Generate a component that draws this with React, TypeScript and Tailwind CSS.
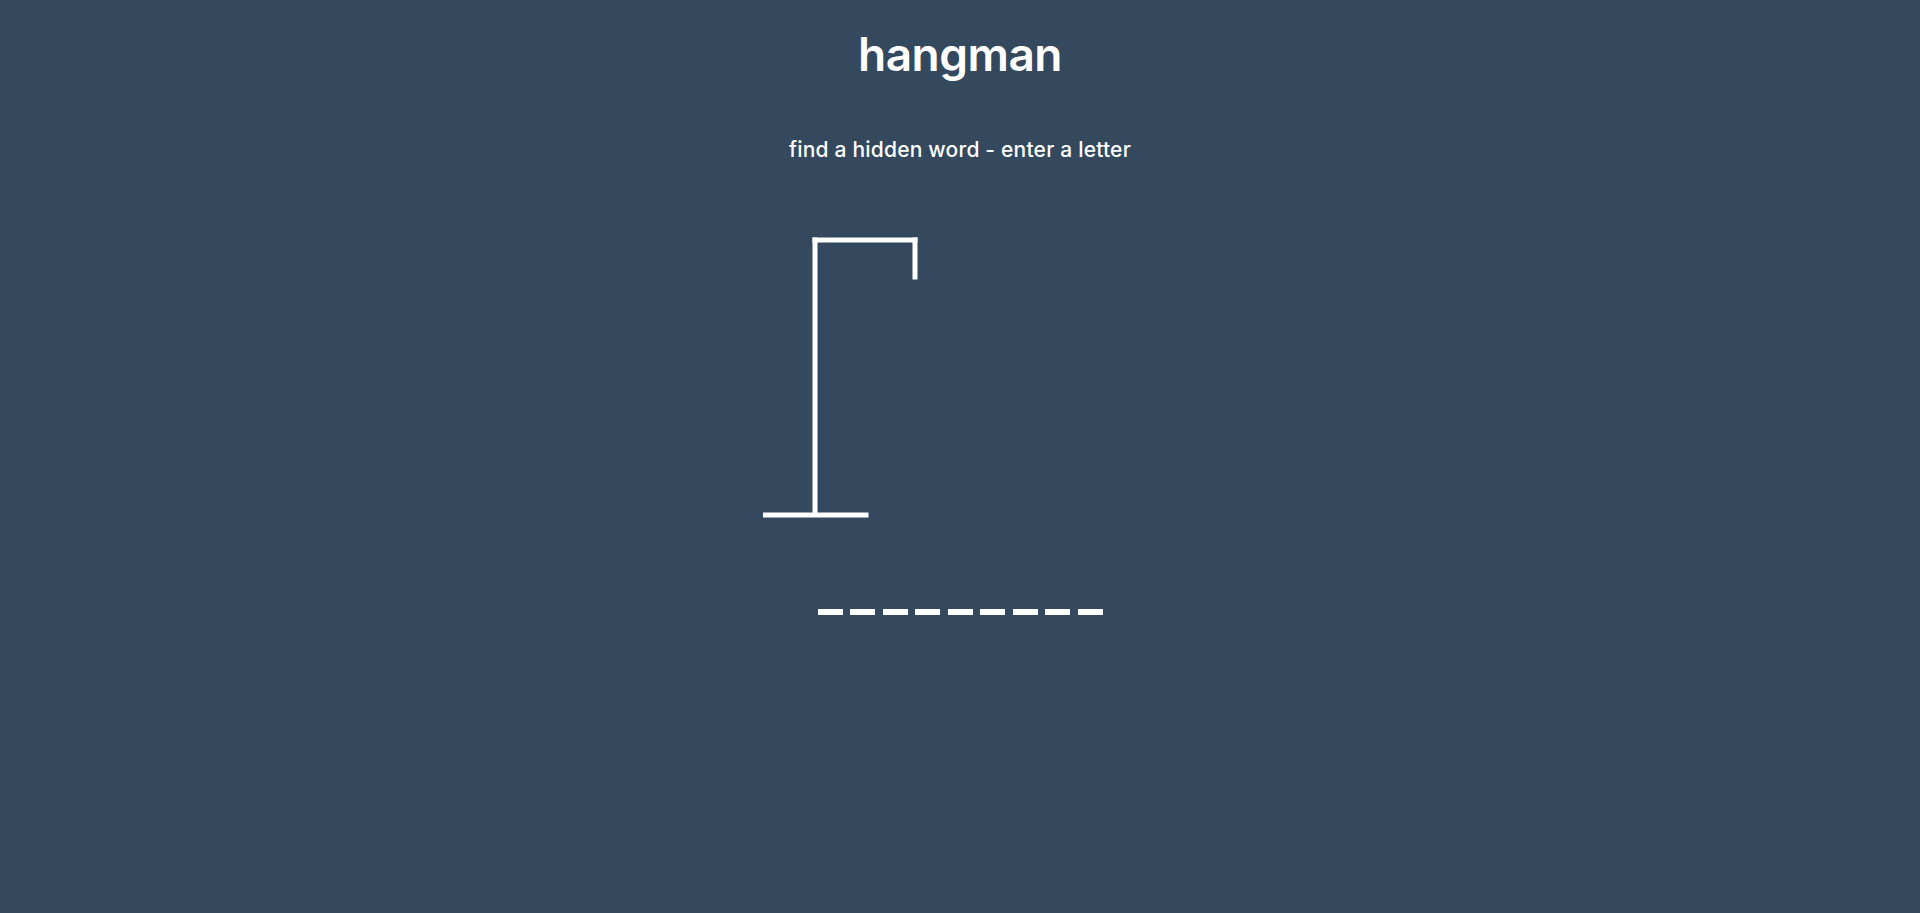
import React from 'react';

const word = 'developer';

const Gallows: React.FC = () => (
  <svg width="400" height="290" viewBox="0 0 400 290">
    {/* pole, top bar, rope, base */}
    <rect x="52.5" y="7.5" width="5" height="279" fill="#fff" />
    <rect x="52.5" y="7.5" width="105" height="5" fill="#fff" />
    <rect x="152.5" y="7.5" width="5" height="42" fill="#fff" />
    <rect x="3" y="282.5" width="105.5" height="5" fill="#fff" />
  </svg>
);

export default function App() {
  return (
    <div
      className="min-h-screen w-full bg-[#34495e] text-white flex flex-col items-center"
      style={{ fontFamily: 'Inter, "Open Sans", sans-serif' }}
    >
      <h1 className="mt-[31px] text-[46px] leading-none font-semibold tracking-[-0.5px]">hangman</h1>
      <p className="mt-[62px] text-[21px] leading-none font-medium tracking-[0.2px]">
        find a hidden word - enter a letter
      </p>

      <div className="mt-[70px]">
        <Gallows />
      </div>

      <div className="mt-[89px] flex gap-[7.5px]">
        {word.split('').map((_, i) => (
          <span key={i} className="block w-[25px] h-[6px] bg-white" />
        ))}
      </div>
    </div>
  );
}
